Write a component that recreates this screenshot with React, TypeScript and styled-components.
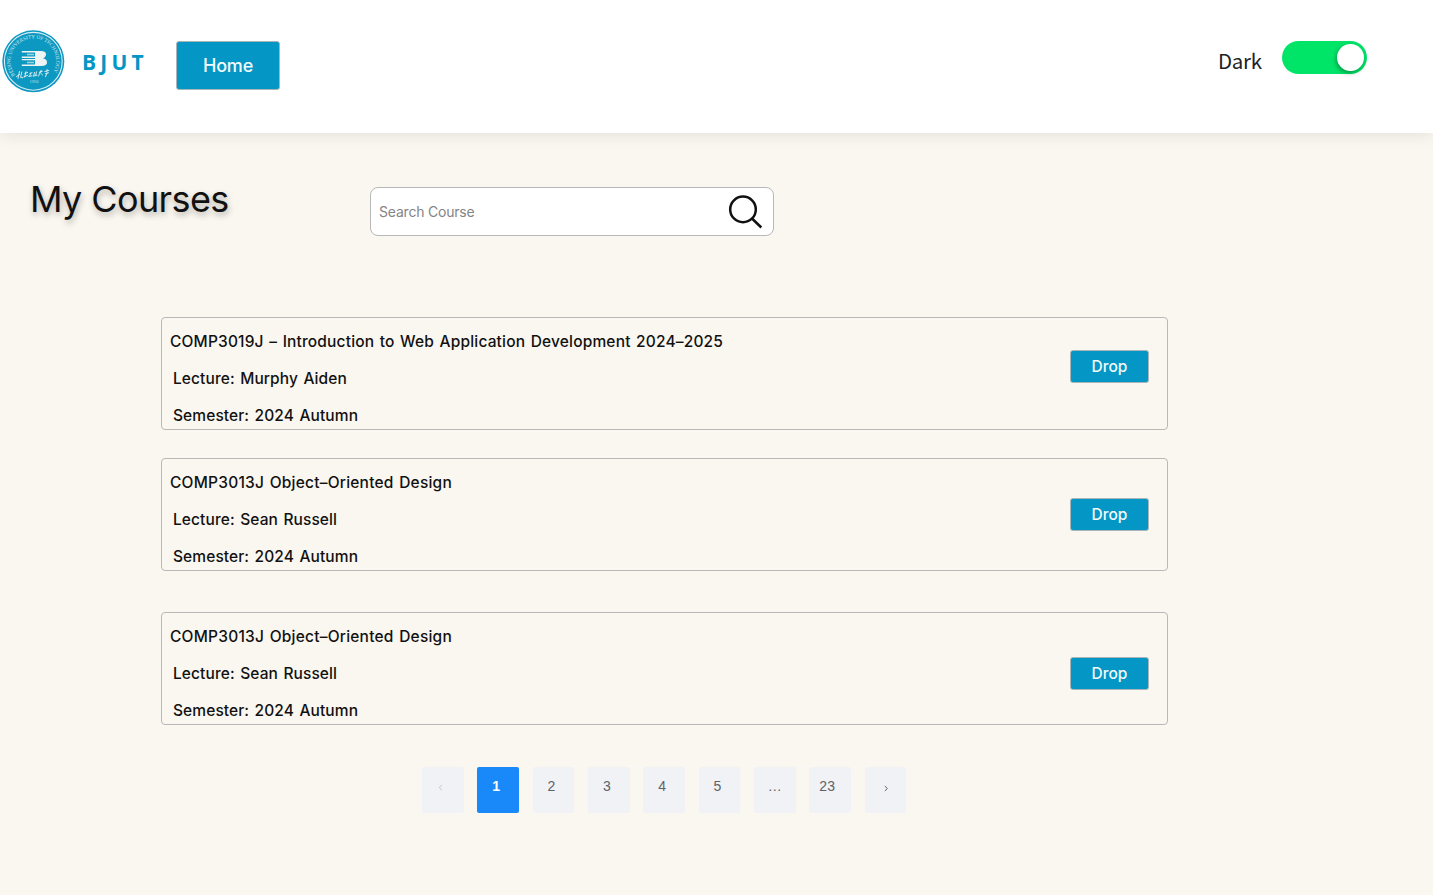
import React from "react";
import styled, { createGlobalStyle } from "styled-components";

const GlobalStyle = createGlobalStyle`
  *, *::before, *::after { box-sizing: border-box; }
  body { margin: 0; background: #faf7f0; font-family: Inter, "Liberation Sans", sans-serif; color: #111; }
`;

const Page = styled.div`
  min-height: 895px;
  background: #faf7f0;
`;

const Header = styled.header`
  display: flex;
  align-items: flex-start;
  height: 133px;
  background: #fff;
  box-shadow: 0 2px 16px rgba(0, 0, 0, 0.09);
`;

const Logo = styled.svg`
  flex: none;
  width: 64px;
  height: 64px;
  margin: 29px 0 0 1px;
`;

const Brand = styled.span`
  width: 94px;
  margin-top: 47px;
  padding-left: 17px;
  font: 700 21px/30px "Open Sans", sans-serif;
  letter-spacing: 4.2px;
  color: #0496c4;
`;

const ActionButton = styled.button<{ $large?: boolean }>`
  flex: none;
  width: ${(p) => (p.$large ? 104 : 79)}px;
  height: ${(p) => (p.$large ? 49 : 33)}px;
  padding: 0;
  border: 1px solid #a9b5b8;
  border-radius: 3px;
  background: #0496c4;
  color: #f3fbfd;
  font: ${(p) => (p.$large ? "500 18px" : "500 15.5px")} Inter, sans-serif;
  letter-spacing: ${(p) => (p.$large ? -0.2 : 0)}px;
`;

const HomeButton = styled(ActionButton)`
  margin: 41px 0 0 17px;
`;

const ThemeSetting = styled.label`
  display: flex;
  gap: 20px;
  margin: 41px 66px 0 auto;
  font: 400 20.5px/39px "Noto Sans CJK SC", sans-serif;
  letter-spacing: -0.2px;
  color: #222;
`;

const Switch = styled.span`
  display: flex;
  justify-content: flex-end;
  width: 85px;
  height: 33px;
  padding: 3px 3.5px;
  border-radius: 17px;
  background: #00e468;
`;

const Knob = styled.span`
  width: 26.5px;
  height: 27px;
  border-radius: 50%;
  background: #fff;
  box-shadow: -1px 2px 4px rgba(0, 40, 20, 0.4);
`;

const Toolbar = styled.section`
  display: flex;
  height: 184px;
`;

const Title = styled.h1`
  width: 370px;
  margin: 42px 0 0;
  padding-left: 30px;
  font: 400 36px/48px Inter, sans-serif;
  letter-spacing: -0.6px;
  text-shadow: 1px 3px 6px rgba(0, 0, 0, 0.3);
  white-space: nowrap;
`;

const SearchBox = styled.div`
  display: flex;
  align-items: center;
  justify-content: space-between;
  width: 404px;
  height: 49px;
  margin-top: 54px;
  padding: 0 10px 0 8px;
  border: 1px solid #b8b8b8;
  border-radius: 8px;
  background: #fff;
  color: #858585;
  font-size: 14px;
  letter-spacing: -0.2px;
`;

const Courses = styled.main`
  width: 1007px;
  margin-left: 161px;
`;

const Card = styled.article<{ $gap: number }>`
  display: flex;
  justify-content: space-between;
  height: 113px;
  margin-bottom: ${(p) => p.$gap}px;
  padding: 5px 18px 0 8px;
  border: 1px solid #b8b8b8;
  border-radius: 4px;
`;

const Info = styled.div`
  font: 500 15.5px/37px Inter, sans-serif;
  word-spacing: 1.2px;
`;

const CourseName = styled.h2<{ $spacing: number }>`
  margin: 0;
  font: inherit;
  letter-spacing: ${(p) => p.$spacing}px;
`;

const Detail = styled.p`
  margin: 0 0 0 3px;
  letter-spacing: 0.1px;
`;

const DropButton = styled(ActionButton)<{ $top: number }>`
  margin-top: ${(p) => p.$top}px;
`;

const Pagination = styled.nav`
  display: flex;
  gap: 13.85px;
  margin: 42px 0 0 422px;
`;

const PageButton = styled.button<{ $active?: boolean; $muted?: boolean; $right?: number; $bottom?: number }>`
  width: 41.5px;
  height: 46px;
  padding: 0 ${(p) => p.$right ?? 4}px ${(p) => p.$bottom ?? 8}px 0;
  border: 0;
  border-radius: 2px;
  background: ${(p) => (p.$active ? "#1989fa" : "#f0f2f5")};
  color: ${(p) => (p.$active ? "#fff" : p.$muted ? "#c0c4cc" : "#606266")};
  font: ${(p) => (p.$active ? 700 : 400)} 14px/16px "Liberation Sans", sans-serif;
`;

const Arrow = styled.svg`
  display: inline-block;
  width: 5px;
  height: 7px;
`;

const courses = [
  { name: "COMP3019J – Introduction to Web Application Development 2024–2025", lecture: "Murphy Aiden", gap: 28, top: 27, spacing: 0.17 },
  { name: "COMP3013J Object–Oriented Design", lecture: "Sean Russell", gap: 41, top: 34, spacing: 0.22 },
  { name: "COMP3013J Object–Oriented Design", lecture: "Sean Russell", gap: 0, top: 39, spacing: 0.22 },
];

function UniversityLogo() {
  return (
    <Logo viewBox="0 0 64 64" aria-label="Beijing University of Technology">
      <circle cx="32.3" cy="32.3" r="31" fill="#0d98c1" />
      <circle cx="32.3" cy="32.3" r="28.9" fill="none" stroke="#d9edf3" strokeWidth="1.1" />
      <path id="ring" d="M14.2 46.1A22.8 22.8 0 1 1 50.4 46.1" fill="none" />
      <text fontFamily="Liberation Serif" fontSize="5.3" fill="#d3e9ef">
        <textPath href="#ring" textLength="97" lengthAdjust="spacing">BEIJING UNIVERSITY OF TECHNOLOGY</textPath>
      </text>
      <path d="M20.8 22H40Q45.2 22 45 25.5Q44.8 28.4 41.8 29.2Q46 30 46 33.2Q46 37 40.5 37H20.8V35.6H34V31.2H20.8V29.9H34V28.9H20.8V27.6H34V23.4H20.8Z" fill="#eef3f3" />
      <path d="M26 25.5H33M26 33.4H33" stroke="#9fd3e3" strokeWidth="1.5" />
      <g fill="none" stroke="#e9f3f5" strokeWidth="0.9" strokeLinecap="round" strokeLinejoin="round">
        <path d="M15.5 47.5l3-2M18.5 42.5l-1.5 7M20.8 43l-1.2 5.5 2 .2" />
        <path d="M23.8 44.3l2.7-.8M25 42.7l-1.3 5.3M22.8 47.8l4-1.5" />
        <path d="M28.8 44.5l2.2-.8M29.8 44l-1 3M27.8 47.5l3-.7" />
        <path d="M33.5 43.4l-.7 3M35.5 42.8l-.8 3.4M32.2 47.2l3.8-1" />
        <path d="M38.3 43.3l3-1M40.2 41.3l-2.7 5.8M39.6 44l2 2" />
        <path d="M43.8 42.5l4-1M46.2 40.5l-.5 2M44.5 44.7l3-.9M46.1 43.7l-1.6 4" />
      </g>
      <text x="28.5" y="54.3" textLength="9" fontFamily="Liberation Serif" fontSize="4.5" fill="#b9dfea">1960</text>
    </Logo>
  );
}

export default function App() {
  return (
    <Page>
      <GlobalStyle />
      <Header>
        <UniversityLogo />
        <Brand>BJUT</Brand>
        <HomeButton $large>Home</HomeButton>
        <ThemeSetting>
          Dark
          <Switch role="switch" aria-checked="true"><Knob /></Switch>
        </ThemeSetting>
      </Header>
      <Toolbar>
        <Title>My Courses</Title>
        <SearchBox>
          Search Course
          <svg width="36" height="36" viewBox="0 0 36 36" fill="none" stroke="#111" strokeWidth="2.5">
            <circle cx="16" cy="15.4" r="12.8" />
            <path d="M25 24.5L34.3 33.5" />
          </svg>
        </SearchBox>
      </Toolbar>
      <Courses>
        {courses.map((c, i) => (
          <Card key={i} $gap={c.gap}>
            <Info>
              <CourseName $spacing={c.spacing}>{c.name}</CourseName>
              <Detail>Lecture: {c.lecture}</Detail>
              <Detail>Semester: 2024 Autumn</Detail>
            </Info>
            <DropButton $top={c.top}>Drop</DropButton>
          </Card>
        ))}
      </Courses>
      <Pagination>
        <PageButton $muted $right={4} $bottom={9}>
          <Arrow viewBox="0 0 5 7" fill="none" stroke="currentColor"><path d="M3.8 1L1.2 3.5l2.6 2.5" /></Arrow>
        </PageButton>
        <PageButton $active>1</PageButton>
        <PageButton>2</PageButton>
        <PageButton>3</PageButton>
        <PageButton>4</PageButton>
        <PageButton>5</PageButton>
        <PageButton $right={0}>…</PageButton>
        <PageButton $right={6}>23</PageButton>
        <PageButton $right={0} $bottom={6}>
          <Arrow viewBox="0 0 5 7" fill="none" stroke="currentColor"><path d="M1.8 1l2.6 2.5L1.8 6" /></Arrow>
        </PageButton>
      </Pagination>
    </Page>
  );
}
